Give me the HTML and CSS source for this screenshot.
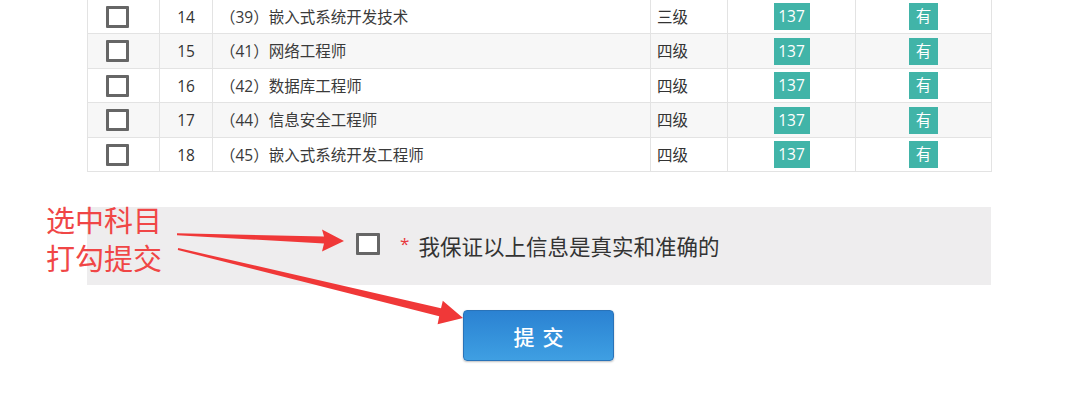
FILE: index.html
```html
<!DOCTYPE html>
<html lang="zh-CN">
<head>
<meta charset="utf-8">
<title>报名科目</title>
<link rel="stylesheet" href="styles.css">
</head>
<body>
<div class="page">
  <div class="main">
    <table class="subjects">
      <colgroup>
        <col class="c1"><col class="c2"><col class="c3"><col class="c4"><col class="c5"><col class="c6">
      </colgroup>
      <tbody>
        <tr class="r34">
          <td class="chk"><span class="box"></span></td>
          <td class="num">14</td>
          <td class="name">（39）嵌入式系统开发技术</td>
          <td class="lvl">三级</td>
          <td class="ctr"><span class="badge wide">137</span></td>
          <td class="ctr"><span class="badge">有</span></td>
        </tr>
        <tr class="r35 alt">
          <td class="chk"><span class="box"></span></td>
          <td class="num">15</td>
          <td class="name">（41）网络工程师</td>
          <td class="lvl">四级</td>
          <td class="ctr"><span class="badge wide">137</span></td>
          <td class="ctr"><span class="badge">有</span></td>
        </tr>
        <tr class="r34">
          <td class="chk"><span class="box"></span></td>
          <td class="num">16</td>
          <td class="name">（42）数据库工程师</td>
          <td class="lvl">四级</td>
          <td class="ctr"><span class="badge wide">137</span></td>
          <td class="ctr"><span class="badge">有</span></td>
        </tr>
        <tr class="r35 alt">
          <td class="chk"><span class="box"></span></td>
          <td class="num">17</td>
          <td class="name">（44）信息安全工程师</td>
          <td class="lvl">四级</td>
          <td class="ctr"><span class="badge wide">137</span></td>
          <td class="ctr"><span class="badge">有</span></td>
        </tr>
        <tr class="r34">
          <td class="chk"><span class="box"></span></td>
          <td class="num">18</td>
          <td class="name">（45）嵌入式系统开发工程师</td>
          <td class="lvl">四级</td>
          <td class="ctr"><span class="badge wide">137</span></td>
          <td class="ctr"><span class="badge">有</span></td>
        </tr>
      </tbody>
    </table>

    <div class="confirm">
      <span class="box big"></span>
      <span class="star">*</span>
      <span class="confirm-text">我保证以上信息是真实和准确的</span>
    </div>

    <div class="actions">
      <button class="submit" type="button">提交</button>
    </div>
  </div>

  <div class="note">选中科目<br>打勾提交</div>

  <svg class="arrows" width="1080" height="396" viewBox="0 0 1080 396" aria-hidden="true">
    <polygon points="177,233.3 324,236.5 322,229.5 344,241 322,251.5 324,243.5 177,235.2"/>
    <polygon points="178.2,248 441,308.2 442.8,300.8 463,318 437.6,324.2 439.2,316.2 177.8,250"/>
  </svg>
</div>
</body>
</html>
```

FILE: styles.css
```css
html, body {
  margin: 0;
  padding: 0;
  background: #ffffff;
}

.page {
  position: relative;
  width: 1080px;
  height: 396px;
  overflow: hidden;
  font-family: "Open Sans", "Noto Sans CJK SC", sans-serif;
  color: #333333;
}

.main {
  width: 904px;
  margin-left: 87px;
}

.subjects {
  width: 904px;
  table-layout: fixed;
  border-collapse: separate;
  border-spacing: 0;
  border-left: 1px solid #e3e3e3;
  font-size: 15.5px;
}

.subjects .c1 { width: 72px; }
.subjects .c2 { width: 53px; }
.subjects .c3 { width: 438px; }
.subjects .c4 { width: 77px; }
.subjects .c5 { width: 128px; }
.subjects .c6 { width: 136px; }

.subjects td {
  padding: 0 7px;
  border-right: 1px solid #e3e3e3;
  border-bottom: 1px solid #e3e3e3;
  vertical-align: middle;
  white-space: nowrap;
  line-height: 20px;
}

.r34 { height: 34px; }
.r35 { height: 35px; }

.alt td { background: #f7f7f7; }

.subjects td.chk {
  padding: 0 0 0 18px;
  font-size: 0;
  line-height: 0;
}

.box {
  display: inline-block;
  box-sizing: border-box;
  width: 23px;
  height: 22px;
  border: 3px solid #666666;
  border-radius: 1px;
  background: #ffffff;
  vertical-align: middle;
}

.subjects td.num {
  text-align: center;
  padding: 0;
}

.subjects td.name {
  color: #3a3a3a;
  padding-left: 7px;
}

.subjects td.lvl {
  padding-left: 6px;
}

.subjects td.ctr {
  text-align: center;
  padding: 0;
}

.badge {
  display: inline-block;
  width: 29px;
  height: 27px;
  line-height: 27px;
  background: #41b4a8;
  color: #ffffff;
  font-size: 15.5px;
  text-align: center;
  vertical-align: middle;
}

.badge.wide { width: 36px; }

.confirm {
  margin-top: 35px;
  height: 78px;
  background: #eeedee;
  display: flex;
  align-items: center;
  padding-left: 269px;
}

.box.big {
  width: 24px;
  height: 22px;
  margin-top: -5px;
}

.star {
  color: #e8383d;
  font-size: 17px;
  margin-left: 20px;
  margin-top: -6px;
}

.confirm-text {
  margin-left: 9px;
  font-family: "Noto Sans CJK SC", sans-serif;
  font-size: 21.5px;
  color: #333333;
  margin-top: -2px;
}

.actions {
  padding-top: 25px;
  padding-left: 376px;
}

.submit {
  display: block;
  width: 151px;
  height: 51px;
  box-sizing: border-box;
  border: 1px solid #2a73b8;
  border-radius: 4px;
  background: linear-gradient(to bottom, #2b82d2 0%, #3592db 55%, #3f9fe2 100%);
  box-shadow: 0 1px 2px rgba(0, 0, 0, 0.25);
  color: #ffffff;
  font-family: "Noto Sans CJK SC", sans-serif;
  font-size: 21px;
  font-weight: 500;
  letter-spacing: 8px;
  text-indent: 8px;
  padding: 0;
  cursor: pointer;
}

.note {
  position: absolute;
  left: 46px;
  top: 200px;
  font-family: "Noto Sans CJK SC", sans-serif;
  font-size: 29px;
  line-height: 38px;
  color: #f04646;
}

.arrows {
  position: absolute;
  left: 0;
  top: 0;
  fill: #f03838;
}
```
